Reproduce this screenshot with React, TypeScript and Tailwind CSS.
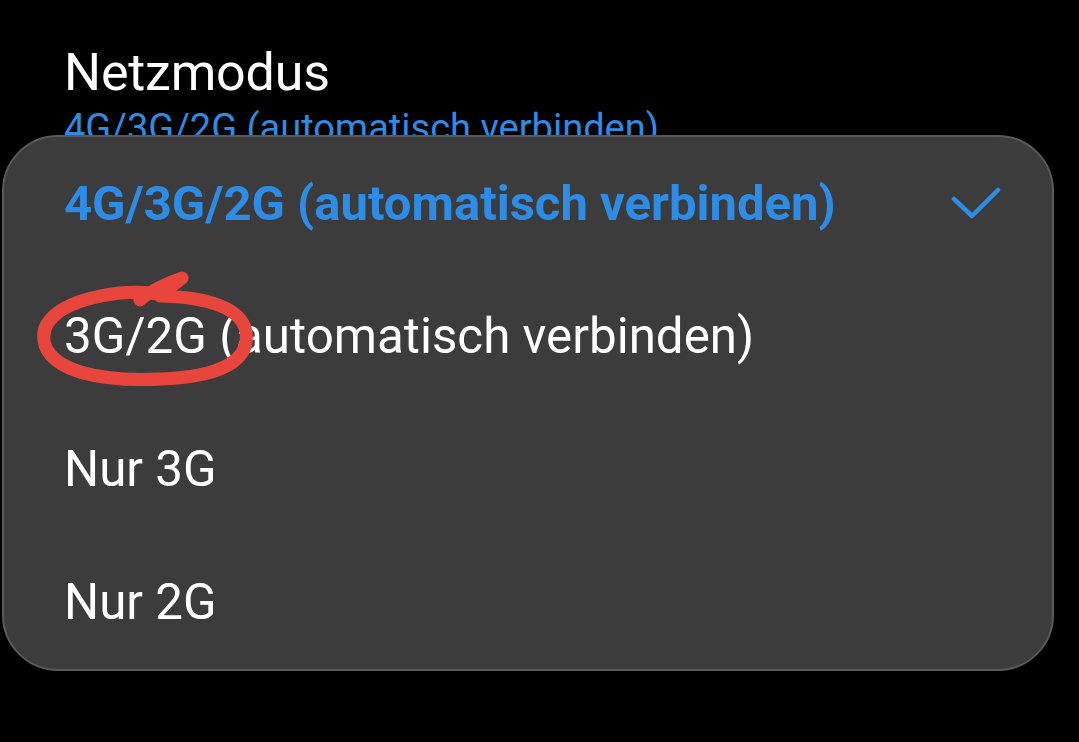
import React from "react";

const font = { fontFamily: "Roboto, 'Noto Sans', sans-serif" };

export default function App() {
  const items = [
    { label: "4G/3G/2G (automatisch verbinden)", selected: true },
    { label: "3G/2G (automatisch verbinden)", selected: false },
    { label: "Nur 3G", selected: false },
    { label: "Nur 2G", selected: false },
  ];
  return (
    <div
      className="relative w-[1079px] h-[742px] overflow-hidden bg-black"
      style={font}
    >
      <div className="pl-[64px] pt-[47px]">
        <div className="text-[52px] leading-none text-white tracking-[-0.2px]">Netzmodus</div>
        <div className="mt-[10px] text-[38px] leading-none text-[#2f8be3]">
          4G/3G/2G (automatisch verbinden)
        </div>
      </div>

      <div className="absolute left-[2px] right-[25px] top-[135px] h-[536px] rounded-[56px] border-2 border-[#595959] bg-[#3c3c3c]">
        <div className="flex flex-col">
          {items.map((it) => (
            <div
              key={it.label}
              className="flex h-[133px] items-center justify-between pl-[60px] pr-[50px]"
            >
              <span
                className={
                  it.selected
                    ? "text-[49px] leading-none font-bold text-[#2d8ce6]"
                    : "text-[49.3px] leading-none text-white"
                }
              >
                {it.label}
              </span>
              {it.selected && (
                <svg width="52" height="36" viewBox="0 0 52 36" className="mt-[2px]">
                  <path
                    d="M4 12 L22 29 L48 3"
                    fill="none"
                    stroke="#2d8ce6"
                    strokeWidth="4.5"
                    strokeLinecap="round"
                    strokeLinejoin="round"
                  />
                </svg>
              )}
            </div>
          ))}
        </div>
      </div>

      <svg
        className="pointer-events-none absolute left-0 top-0"
        width="1079"
        height="742"
        viewBox="0 0 1079 742"
      >
        <path
          d="M140 300 C150 291, 168 283, 182 278 C174 285, 162 291, 160 296 C205 297, 242 307, 246 332 C250 360, 222 377, 160 379 C100 382, 54 371, 45 345 C37 318, 68 299, 120 293 C140 291, 152 292, 166 296"
          fill="none"
          stroke="#e8463c"
          strokeWidth="13"
          strokeLinecap="round"
          strokeLinejoin="round"
        />
      </svg>
    </div>
  );
}
